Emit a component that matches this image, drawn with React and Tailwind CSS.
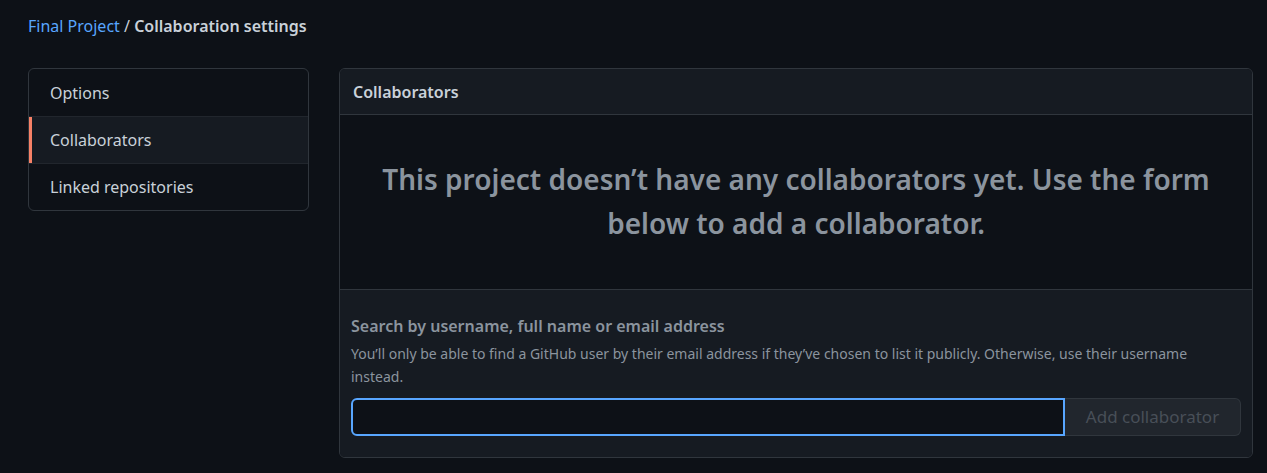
import { useState } from "react";

const font = { fontFamily: '"Noto Sans", "Open Sans", Arial, sans-serif' };

export default function App() {
  const [active, setActive] = useState("Collaborators");
  const [query, setQuery] = useState("");
  const items = ["Options", "Collaborators", "Linked repositories"];

  return (
    <div
      className="min-h-[473px] w-full bg-[#0d1117] text-[#c9d1d9] pl-7 pr-[14px] pt-[14px]"
      style={font}
    >
      <div className="text-[16px] leading-6 mb-[30px]">
        <a className="text-[#58a6ff]">Final Project</a>
        <span className="text-[#c9d1d9]"> / </span>
        <span className="font-semibold text-[#c9d1d9]">Collaboration settings</span>
      </div>

      <div className="flex gap-[30px] items-start">
        {/* sidebar */}
        <nav className="w-[281px] shrink-0 border border-[#30363d] rounded-md overflow-hidden">
          {items.map((item, i) => (
            <div
              key={item}
              onClick={() => setActive(item)}
              className={
                "h-[47px] flex items-center pl-[21px] text-[16px] cursor-pointer relative " +
                (i > 0 ? "border-t border-[#21262d] " : "") +
                (active === item ? "bg-[#161b22]" : "")
              }
            >
              {active === item && (
                <span className="absolute left-0 top-0 bottom-0 w-[3px] bg-[#f78166]" />
              )}
              {item}
            </div>
          ))}
        </nav>

        {/* main panel */}
        <div className="flex-1 border border-[#30363d] rounded-md overflow-hidden">
          <div className="h-[46px] flex items-center px-[13px] bg-[#161b22] border-b border-[#30363d] font-semibold text-[16px]">
            Collaborators
          </div>
          <div className="h-[175px] flex items-center justify-center px-10 pb-[2px] border-b border-[#30363d]">
            <p className="text-center text-[28px] leading-[44px] font-semibold text-[#8b949e] max-w-[860px]">
              This project doesn’t have any collaborators yet. Use the form below to add a collaborator.
            </p>
          </div>
          <div className="bg-[#161b22] px-[11px] pt-[24px] pb-[21px]">
            <div className="text-[16px] font-semibold text-[#8b949e] leading-6">
              Search by username, full name or email address
            </div>
            <p className="text-[14px] leading-[23px] text-[#8b949e] mt-[4px] pr-10">
              You’ll only be able to find a GitHub user by their email address if they’ve chosen to list it publicly. Otherwise, use their username instead.
            </p>
            <div className="flex mt-[10px]">
              <input
                autoFocus
                value={query}
                onChange={(e) => setQuery(e.target.value)}
                className="flex-1 h-[38px] bg-[#0d1117] border-2 border-[#58a6ff] rounded-l-md px-3 text-[16px] text-[#c9d1d9] outline-none caret-[#c9d1d9]"
              />
              <button
                disabled
                className="w-[176px] h-[38px] bg-[#21262d] border border-[#30363d] border-l-0 rounded-r-md text-[17px] text-[#484f58]"
              >
                Add collaborator
              </button>
            </div>
          </div>
        </div>
      </div>
    </div>
  );
}
